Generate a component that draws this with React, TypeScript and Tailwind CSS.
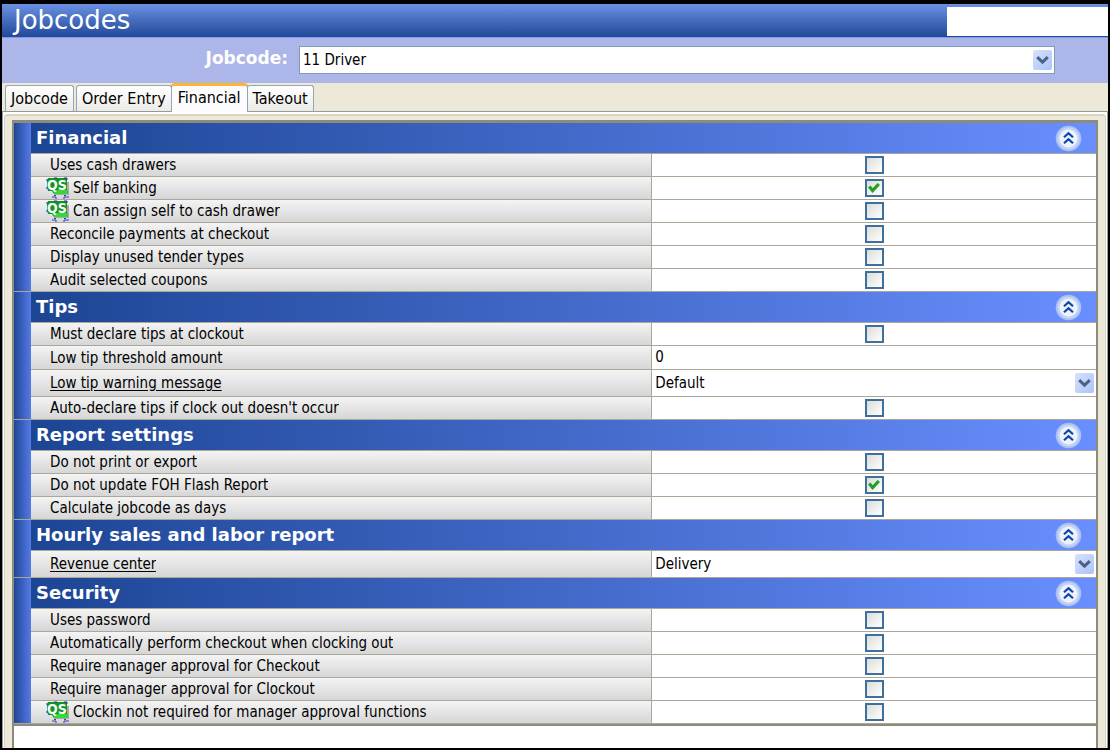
import { useState } from "react";

interface Setting {
  id: string;
  label: string;
  kind: "check" | "text" | "select";
  value?: string;
  checked?: boolean;
  quickService?: boolean;
}

interface Section {
  title: string;
  settings: Setting[];
}

const TABS = ["Jobcode", "Order Entry", "Financial", "Takeout"];

const SECTIONS: Section[] = [
  {
    title: "Financial",
    settings: [
      { id: "cashDrawers", label: "Uses cash drawers", kind: "check" },
      { id: "selfBanking", label: "Self banking", kind: "check", checked: true, quickService: true },
      { id: "assignSelf", label: "Can assign self to cash drawer", kind: "check", quickService: true },
      { id: "reconcile", label: "Reconcile payments at checkout", kind: "check" },
      { id: "unusedTenders", label: "Display unused tender types", kind: "check" },
      { id: "auditCoupons", label: "Audit selected coupons", kind: "check" },
    ],
  },
  {
    title: "Tips",
    settings: [
      { id: "declareTips", label: "Must declare tips at clockout", kind: "check" },
      { id: "tipThreshold", label: "Low tip threshold amount", kind: "text", value: "0" },
      { id: "tipWarning", label: "Low tip warning message", kind: "select", value: "Default" },
      { id: "autoDeclare", label: "Auto-declare tips if clock out doesn't occur", kind: "check" },
    ],
  },
  {
    title: "Report settings",
    settings: [
      { id: "noPrint", label: "Do not print or export", kind: "check" },
      { id: "noFlash", label: "Do not update FOH Flash Report", kind: "check", checked: true },
      { id: "asDays", label: "Calculate jobcode as days", kind: "check" },
    ],
  },
  {
    title: "Hourly sales and labor report",
    settings: [{ id: "revenueCenter", label: "Revenue center", kind: "select", value: "Delivery" }],
  },
  {
    title: "Security",
    settings: [
      { id: "usesPassword", label: "Uses password", kind: "check" },
      { id: "autoCheckout", label: "Automatically perform checkout when clocking out", kind: "check" },
      { id: "approveCheckout", label: "Require manager approval for Checkout", kind: "check" },
      { id: "approveClockout", label: "Require manager approval for Clockout", kind: "check" },
      { id: "noClockin", label: "Clockin not required for manager approval functions", kind: "check", quickService: true },
    ],
  },
];

const ROW_HEIGHTS = {
  check: "h-[23px]",
  text: "h-6",
  select: "h-[27px]",
};

function QuickServiceIcon() {
  return (
    <svg viewBox="0 0 24 22" className="h-[22px] w-6 shrink-0" aria-hidden="true">
      <path d="M20 5h3v13H8v-2h12z" fill="#a9a9b4" />
      <path d="M2 1h19v11l1 5H8l-2-3H2L1 10V4z" fill="#12922c" />
      <path d="M8 13h13l1 4H8z" fill="#35d935" />
      <path d="M1 4V2M8 1h3M18 1h3v2M1 10v2" fill="none" stroke="#2a2fb4" />
      <path d="M6 20h4M8 18.5h2M18 18.5h2M18 20h5M9 21h2M17 21h2" fill="none" stroke="#3c35d0" />
      <text
        x="11"
        y="13"
        textAnchor="middle"
        fontSize="14"
        fontWeight="bold"
        fill="#f4fff0"
        className="font-['DejaVu_Sans_Condensed','DejaVu_Sans',sans-serif]"
      >
        QS
      </text>
    </svg>
  );
}

function DropArrow() {
  return (
    <svg
      viewBox="0 0 19 20"
      className="pointer-events-none col-start-1 row-start-1 mr-[2px] h-5 w-[19px] self-center justify-self-end"
      aria-hidden="true"
    >
      <defs>
        <linearGradient id="arrowFill" x1="0" y1="0" x2="1" y2="1">
          <stop offset="0" stopColor="#d6e1fd" />
          <stop offset="1" stopColor="#abc4f7" />
        </linearGradient>
      </defs>
      <rect x="0" y="0" width="19" height="20" rx="2" fill="url(#arrowFill)" />
      <path d="M4.2 7.2 9.5 12.2 14.8 7.2" fill="none" stroke="#4d6185" strokeWidth="3" />
    </svg>
  );
}

function CollapseIcon() {
  return (
    <svg viewBox="0 0 27 27" className="size-[27px]" aria-hidden="true">
      <circle cx="13.5" cy="13.5" r="12.8" fill="#a9c0f2" />
      <circle cx="13.5" cy="13.5" r="11" fill="#c6d4f3" />
      <circle cx="13.5" cy="13.5" r="9" fill="#edf2fb" />
      <path d="M9 12.3 13.5 8.3 18 12.3M9 18.3 13.5 14.3 18 18.3" fill="none" stroke="#0d43ac" strokeWidth="2.2" />
    </svg>
  );
}

function CheckCell({ setting }: { setting: Setting }) {
  return (
    <span className="grid flex-1 place-items-center">
      <input
        id={setting.id}
        type="checkbox"
        defaultChecked={setting.checked}
        className="peer col-start-1 row-start-1 h-[18px] w-[19px] appearance-none border-2 border-[#3f6f9c] bg-linear-to-br from-[#dcdcd7] to-white"
      />
      <svg
        viewBox="0 0 12 12"
        className="pointer-events-none invisible col-start-1 row-start-1 size-3 peer-checked:visible"
        aria-hidden="true"
      >
        <path d="M1.2 4.5 4.6 8.6 10.8 2" fill="none" stroke="#21a121" strokeWidth="3.2" />
      </svg>
    </span>
  );
}

function SettingRow({ setting }: { setting: Setting }) {
  return (
    <div className={`grid grid-cols-[7fr_5fr] border-b border-[#aca899] ${ROW_HEIGHTS[setting.kind]}`}>
      <div
        className={`flex min-w-0 items-center gap-[3px] border-r border-[#aca899] bg-linear-to-b from-[#f4f4f4] to-[#d6d6d6] ${
          setting.quickService ? "pl-[15px]" : "pl-[19px]"
        }`}
      >
        {setting.quickService && <QuickServiceIcon />}
        <label
          htmlFor={setting.id}
          className={`truncate leading-5 ${setting.kind === "select" ? "underline underline-offset-2" : ""}`}
        >
          {setting.label}
        </label>
      </div>
      <div className="flex min-w-0 bg-white">
        {setting.kind === "check" && <CheckCell setting={setting} />}
        {setting.kind === "text" && (
          <input id={setting.id} type="text" defaultValue={setting.value} className="w-full px-[3px] outline-none" />
        )}
        {setting.kind === "select" && (
          <div className="grid flex-1">
            <select
              id={setting.id}
              defaultValue={setting.value}
              className="col-start-1 row-start-1 appearance-none px-[3px] outline-none"
            >
              <option>{setting.value}</option>
            </select>
            <DropArrow />
          </div>
        )}
      </div>
    </div>
  );
}

function SettingSection({ section }: { section: Section }) {
  const [open, setOpen] = useState(true);

  return (
    <section className="flex">
      <div className="w-[17px] shrink-0 border-b border-[#aca899] bg-linear-to-r from-[#1f4797] to-[#557be6]" />
      <div className="min-w-0 flex-1">
        <div className="flex h-[31px] items-center justify-between border-b border-[#aca899] bg-linear-to-r from-[#1c4594] to-[#698fff] pr-3.5 pl-[5px]">
          <h2 className="font-['DejaVu_Sans',Verdana,sans-serif] text-[18px] leading-6 font-bold text-white">
            {section.title}
          </h2>
          <button type="button" aria-label={`Toggle ${section.title}`} aria-expanded={open} onClick={() => setOpen(!open)}>
            <CollapseIcon />
          </button>
        </div>
        {open && section.settings.map((setting) => <SettingRow key={setting.id} setting={setting} />)}
      </div>
    </section>
  );
}

export default function App() {
  const [activeTab, setActiveTab] = useState("Financial");

  return (
    <div className="flex min-h-screen flex-col bg-black px-0.5 pt-1 pb-0.5 font-['DejaVu_Sans_Condensed','DejaVu_Sans',Tahoma,sans-serif] text-[15px] text-black">
      <header className="flex h-[34px] justify-between border-b border-[#7f9be6] bg-linear-to-b from-[#6c91e2] to-[#21489a] pl-3">
        <h1 className="font-['DejaVu_Sans',Verdana,sans-serif] text-[26px] leading-8 text-white">Jobcodes</h1>
        <div className="mt-[3px] mb-px w-[161px] bg-white" />
      </header>

      <div className="flex h-[45px] items-start bg-[#adb6e9] pt-2 pr-[53px]">
        <label
          htmlFor="jobcode"
          className="w-[297px] shrink-0 pr-[11px] text-right font-['DejaVu_Sans',Verdana,sans-serif] text-[17px] leading-6 font-bold text-white"
        >
          Jobcode:
        </label>
        <div className="grid h-7 min-w-0 flex-1 border border-[#7f9db9] bg-white">
          <select
            id="jobcode"
            defaultValue="11 Driver"
            className="col-start-1 row-start-1 appearance-none px-[3px] outline-none"
          >
            <option>11 Driver</option>
          </select>
          <DropArrow />
        </div>
      </div>

      <div role="tablist" className="flex h-[29px] items-end border-b border-[#919b9c] bg-[#ece9d8] pl-[3px] text-base">
        {TABS.map((tab) => {
          const active = tab === activeTab;
          return (
            <button
              key={tab}
              type="button"
              role="tab"
              aria-selected={active}
              onClick={() => setActiveTab(tab)}
              className={
                active
                  ? "-mb-px -ml-[3px] h-[29px] rounded-t-sm border-x border-t-[3px] border-x-[#91a7b4] border-t-[#fdb52e] bg-[#fcfcfe] px-1.5 pb-1"
                  : "mr-0.5 h-[26px] rounded-t-[3px] border border-b-0 border-[#91a7b4] bg-linear-to-b from-white to-[#ecebe6] px-[5px] last:-ml-px"
              }
            >
              {tab}
            </button>
          );
        })}
      </div>

      <main className="flex flex-1 flex-col border-x border-[#919b9c] bg-white px-px pt-0.5">
        <div className="flex flex-1 flex-col rounded-t-sm border-x border-t-2 border-[#d8d4c4] bg-[#ece9d8] px-[7px] pt-1">
          <div className="flex flex-1 flex-col border-x-2 border-t-[3px] border-[#8d8b7c] bg-white">
            <div className="border-b-2 border-[#8d8b7c]">
              {SECTIONS.map((section) => (
                <SettingSection key={section.title} section={section} />
              ))}
            </div>
          </div>
        </div>
      </main>
    </div>
  );
}
